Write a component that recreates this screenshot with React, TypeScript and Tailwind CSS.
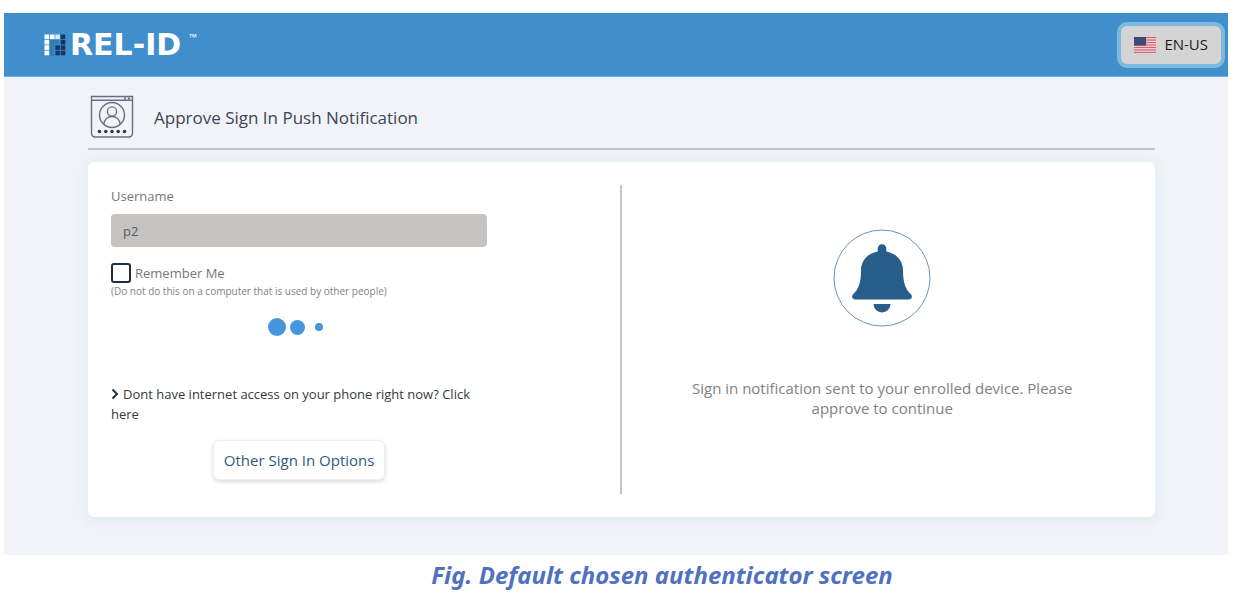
import { useState } from "react";

const SignInPage = () => {
  return (
    <div className="min-h-screen bg-white pt-[13px] pr-3 pl-1 font-['Open_Sans','Noto_Sans',sans-serif]">
      <Header />
      <main className="bg-[#f1f3f8] pt-[18px] pr-[73px] pb-[38px] pl-[84px]">
        <PageTitle title="Approve Sign In Push Notification" />
        <section className="mt-3 flex rounded-md bg-white py-[23px] shadow-[0_2px_12px_2px_#dfecf5]">
          <SignInForm />
          <PushStatus />
        </section>
      </main>
      <p className="pt-2 pl-[92px] text-center font-['Noto_Sans','Open_Sans',sans-serif] text-2xl/6 font-bold text-[#4f71bf] italic">
        Fig. Default chosen authenticator screen
      </p>
    </div>
  );
};

const Header = () => {
  return (
    <header className="flex h-16 items-center justify-between border-b border-[#5fb0de] bg-[#408fcc] pr-[7px] pl-10">
      <a href="#" className="flex items-center text-white">
        <LogoMark />
        <span className="ml-1 font-['DejaVu_Sans',sans-serif] text-[30px]/7 font-bold">
          REL-ID
        </span>
        <span className="ml-2 self-start text-[10px]/3">™</span>
      </a>
      <button
        type="button"
        className="flex h-[38px] items-center gap-2 rounded-md bg-[#d4d4d4] px-[13px] text-[15px] text-[#1d1d1f] ring-4 ring-[#7bb9df]"
      >
        <FlagIcon />
        EN-US
      </button>
    </header>
  );
};

const logoCells = [
  { x: 0, y: 0, color: "#fff" },
  { x: 1, y: 0, color: "#fff" },
  { x: 2, y: 0, color: "#d5f0fb" },
  { x: 3, y: 0, color: "#14375f" },
  { x: 0, y: 1, color: "#fff" },
  { x: 3, y: 1, color: "#14375f" },
  { x: 0, y: 2, color: "#fff" },
  { x: 2, y: 2, color: "#14375f" },
  { x: 3, y: 2, color: "#14375f" },
  { x: 0, y: 3, color: "#fff" },
  { x: 2, y: 3, color: "#14375f" },
  { x: 3, y: 3, color: "#14375f" },
];

const LogoMark = () => {
  return (
    <svg width="22" height="22" viewBox="0 0 22 22" aria-hidden="true">
      <path d="M6 6h9v4h-5v12H6z" fill="#347db7" />
      {logoCells.map((cell) => (
        <rect
          key={`${cell.x}-${cell.y}`}
          x={0.5 + cell.x * 5.4}
          y={0.5 + cell.y * 5.4}
          width="4.6"
          height="4.6"
          fill={cell.color}
        />
      ))}
    </svg>
  );
};

const FlagIcon = () => {
  return (
    <svg width="22" height="16" viewBox="0 0 22 16" aria-hidden="true">
      <rect width="22" height="16" fill="#eadfe2" />
      {[0, 1, 2, 3, 4, 5, 6].map((stripe) => (
        <rect
          key={stripe}
          y={stripe * 2.46}
          width="22"
          height="1.23"
          fill="#d9606d"
        />
      ))}
      <rect width="12" height="8.6" fill="#3f4a78" />
    </svg>
  );
};

const PageTitle = ({ title }: { title: string }) => {
  return (
    <div className="flex h-[55px] gap-5 border-b-2 border-[#c3c2c5] pl-[2px]">
      <LoginIcon />
      <h1 className="pt-[11px] text-[17px]/6 text-[#3c4654]">{title}</h1>
    </div>
  );
};

const LoginIcon = () => {
  return (
    <svg
      width="44"
      height="44"
      viewBox="0 0 44 44"
      fill="none"
      stroke="#667080"
      strokeWidth="1.4"
      aria-hidden="true"
    >
      <path d="M1.5 1.5h41v37a3.5 3.5 0 0 1-3.5 3.5h-34a3.5 3.5 0 0 1-3.5-3.5z" />
      <path d="M1.5 5.3h41" />
      <path d="M34 3.4h2M38 3.4h2" strokeWidth="2" />
      <circle cx="22" cy="20" r="12.5" />
      <circle cx="22" cy="16.5" r="4.6" />
      <path d="M13.8 29c.7-4.5 4-7.5 8.2-7.5s7.5 3 8.2 7.5" />
      <g fill="#2f3947" stroke="none">
        <circle cx="9.5" cy="36.5" r="1.8" />
        <circle cx="15.8" cy="36.5" r="1.8" />
        <circle cx="22" cy="36.5" r="1.8" />
        <circle cx="28.2" cy="36.5" r="1.8" />
        <circle cx="34.5" cy="36.5" r="1.8" />
      </g>
    </svg>
  );
};

const SignInForm = () => {
  const [remember, setRemember] = useState<boolean>(false);

  return (
    <form className="w-1/2 border-r-2 border-[#c6c6c9] pb-[14px] pl-[23px]">
      <div className="flex w-[74%] flex-col">
        <label htmlFor="username" className="pt-px text-[13px]/5 text-[#77777a]">
          Username
        </label>
        <input
          id="username"
          type="text"
          value="p2"
          readOnly
          className="mt-2 h-[33px] rounded-sm bg-[#c5c2c2] px-3 text-[13px] text-[#5c5c60] outline-none"
        />
        <div className="mt-4 flex items-center gap-1">
          <input
            id="remember"
            type="checkbox"
            checked={remember}
            onChange={(e) => setRemember(e.target.checked)}
            className="size-5 appearance-none rounded-[3px] border-2 border-[#1e2f42] bg-white checked:bg-[#408fcc]"
          />
          <label htmlFor="remember" className="text-[13px]/5 text-[#77777a]">
            Remember Me
          </label>
        </div>
        <p className="text-[10px]/4 text-[#818185]">
          (Do not do this on a computer that is used by other people)
        </p>
        <Loader />
        <a href="#" className="mt-12 text-[13px]/5 text-[#333a42]">
          <svg
            width="8"
            height="12"
            viewBox="0 0 8 12"
            fill="none"
            stroke="#1e2f42"
            strokeWidth="2"
            className="mr-1 inline align-[-1px]"
            aria-hidden="true"
          >
            <path d="M1.5 1.5 6 6l-4.5 4.5" />
          </svg>
          Dont have internet access on your phone right now? Click here
        </a>
        <button
          type="button"
          className="mt-4 h-10 self-center rounded-md border border-[#f0f0f2] bg-white px-[10px] text-[15px] text-[#2f5b7e] shadow-[0_2px_4px_#dcdce0]"
        >
          Other Sign In Options
        </button>
      </div>
    </form>
  );
};

const Loader = () => {
  return (
    <div
      className="mt-[19px] flex h-[18px] items-center justify-center pr-2"
      role="status"
    >
      <span className="size-[18px] rounded-full bg-[#4795dd]" />
      <span className="ml-1 size-[15px] rounded-full bg-[#4795dd]" />
      <span className="ml-[10px] size-2 rounded-full bg-[#4795dd]" />
    </div>
  );
};

const PushStatus = () => {
  return (
    <div className="flex w-1/2 flex-col items-center pt-11 pr-3">
      <BellIcon />
      <p className="mt-[51px] w-[74%] text-center text-[15px]/5 text-[#818184]">
        Sign in notification sent to your enrolled device. Please approve to
        continue
      </p>
    </div>
  );
};

const BellIcon = () => {
  return (
    <svg width="98" height="98" viewBox="0 0 98 98" aria-hidden="true">
      <circle cx="49" cy="49" r="48" fill="#fff" stroke="#6796ba" />
      <g fill="#285e8a">
        <path d="M44.7 22.5v-3a4.3 4.3 0 0 1 8.6 0v3C63.5 24.5 70 31.5 70 41.5c0 14 3.5 19.5 7.7 23.6 2.3 2.3 1 5.4-2 5.4H22.3c-3 0-4.3-3.1-2-5.4C24.5 61 28 55.5 28 41.5c0-10 6.5-17 16.7-19z" />
        <path d="M40.5 75h17a8.5 8.5 0 0 1-17 0z" />
      </g>
    </svg>
  );
};

export default SignInPage;
